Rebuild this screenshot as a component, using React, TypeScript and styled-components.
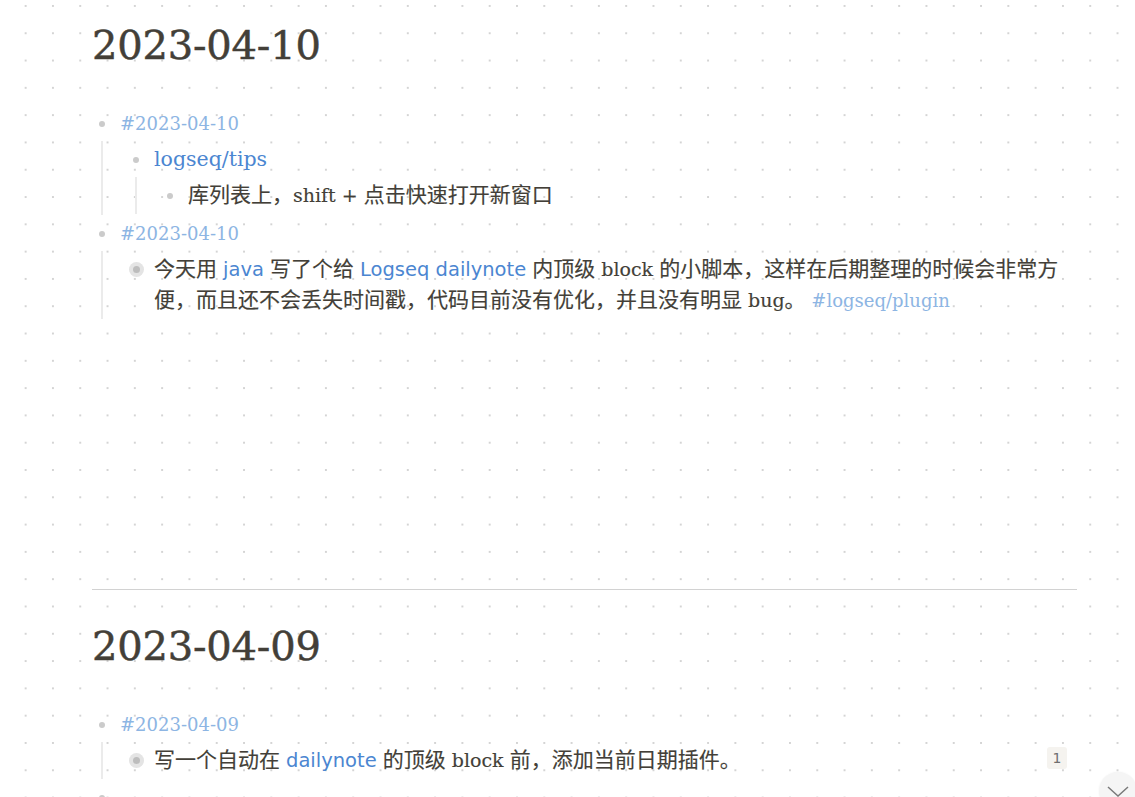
import React from "react";
import styled, { createGlobalStyle, css } from "styled-components";

const GlobalStyle = createGlobalStyle`
  html, body {
    margin: 0;
    padding: 0;
    overflow: hidden;
  }
  body {
    background-color: #ffffff;
    background-image: radial-gradient(circle, #d4d4d4 0.9px, rgba(255,255,255,0) 1.3px);
    background-size: 27.3px 27.3px;
    background-position: 12px 19.6px;
    font-family: "DejaVu Serif", "Noto Sans CJK SC", serif;
    color: #433f38;
  }
`;

const Page = styled.main`
  padding-left: 92px;
  width: 985px;
`;

const Journal = styled.section<{ $first?: boolean }>`
  box-sizing: border-box;
  padding-top: 21px;
  ${(p) =>
    p.$first &&
    css`
      min-height: 589px;
    `}
`;

const Divider = styled.hr`
  border: none;
  height: 1px;
  background: #d2d2d2;
  margin: 0 0 11px 0;
`;

const Title = styled.h1`
  margin: 0 0 36px 0;
  font-family: "DejaVu Serif", serif;
  font-weight: 400;
  font-size: 40px;
  line-height: 48px;
  color: #433f38;
  letter-spacing: -0.2px;
  -webkit-text-stroke: 0.5px #433f38;
`;

const BlockList = styled.div`
  display: flex;
  flex-direction: column;
`;

const Row = styled.div`
  display: flex;
  align-items: flex-start;
  padding: 3px 0 2px 0;
`;

const BulletBox = styled.span`
  flex: 0 0 20px;
  height: 31px;
  margin-right: 8px;
  display: flex;
  align-items: center;
  justify-content: center;
`;

const Bullet = styled.span<{ $collapsed?: boolean }>`
  display: block;
  border-radius: 50%;
  ${(p) =>
    p.$collapsed
      ? css`
          width: 7px;
          height: 7px;
          background: #bdbdbd;
          box-shadow: 0 0 0 4px #e4e4e4;
        `
      : css`
          width: 6px;
          height: 6px;
          background: #cbcbcb;
        `}
`;

const Content = styled.div`
  flex: 1;
  min-width: 0;
  font-size: 19px;
  line-height: 31px;
  color: #433f38;
  -webkit-text-stroke: 0.15px #433f38;
`;

const Children = styled.div`
  margin-left: 9px;
  border-left: 2px solid #ebebeb;
  padding-left: 23px;
  padding-bottom: 1px;
`;

const Zh = styled.span`
  font-family: "Noto Sans CJK SC", sans-serif;
  font-size: 21px;
  line-height: 1;
`;

const Tag = styled.span`
  color: #8db5e3;
  font-family: "DejaVu Serif", serif;
  font-size: 18px;
  -webkit-text-stroke: 0;
`;

const PageRef = styled.span<{ $serif?: boolean }>`
  color: #4b86d1;
  font-family: ${(p) => (p.$serif ? `"DejaVu Serif", serif` : `"DejaVu Sans", sans-serif`)};
  font-size: ${(p) => (p.$serif ? "20.5px" : "19.5px")};
  -webkit-text-stroke: 0;
`;

const Badge = styled.span`
  flex: 0 0 auto;
  margin: 2px 10px 0 8px;
  width: 20px;
  height: 22px;
  border-radius: 3px;
  background: #f5f3ef;
  color: #6f6f6f;
  font-family: "DejaVu Sans", sans-serif;
  font-size: 14px;
  line-height: 22px;
  text-align: center;
`;

const FloatButton = styled.button`
  position: fixed;
  right: -2px;
  bottom: -13px;
  width: 38px;
  height: 38px;
  border-radius: 50%;
  border: none;
  background: #f5f5f5;
  box-shadow: 0 0 2px rgba(0, 0, 0, 0.06);
  display: flex;
  align-items: flex-start;
  justify-content: center;
  padding: 14px 0 0 0;
  color: #7a7a7a;
`;

type BlockProps = {
  content?: React.ReactNode;
  collapsed?: boolean;
  badge?: string;
  children?: React.ReactNode;
};

function Block({ content, collapsed, badge, children }: BlockProps) {
  return (
    <div>
      <Row>
        <BulletBox>
          <Bullet $collapsed={collapsed} />
        </BulletBox>
        <Content>{content}</Content>
        {badge && <Badge>{badge}</Badge>}
      </Row>
      {children && <Children>{children}</Children>}
    </div>
  );
}

export default function App() {
  return (
    <>
      <GlobalStyle />
      <Page>
        <Journal $first>
          <Title>2023-04-10</Title>
          <BlockList>
            <Block content={<Tag>#2023-04-10</Tag>}>
              <Block content={<PageRef $serif>logseq/tips</PageRef>}>
                <Block
                  content={
                    <>
                      <Zh>库列表上，</Zh>shift + <Zh>点击快速打开新窗口</Zh>
                    </>
                  }
                />
              </Block>
            </Block>
            <Block content={<Tag>#2023-04-10</Tag>}>
              <Block
                collapsed
                content={
                  <>
                    <Zh>今天用</Zh> <PageRef>java</PageRef> <Zh>写了个给</Zh>{" "}
                    <PageRef>Logseq dailynote</PageRef> <Zh>内顶级</Zh> block{" "}
                    <Zh>
                      的小脚本，这样在后期整理的时候会非常方便，而且还不会丢失时间戳，代码目前没有优化，并且没有明显
                    </Zh>{" "}
                    bug<Zh>。</Zh><Tag> #logseq/plugin</Tag>
                  </>
                }
              />
            </Block>
          </BlockList>
        </Journal>
        <Divider />
        <Journal>
          <Title>2023-04-09</Title>
          <BlockList>
            <Block content={<Tag>#2023-04-09</Tag>}>
              <Block
                collapsed
                badge="1"
                content={
                  <>
                    <Zh>写一个自动在</Zh> <PageRef>dailynote</PageRef> <Zh>的顶级</Zh> block{" "}
                    <Zh>前，添加当前日期插件。</Zh>
                  </>
                }
              />
            </Block>
            <Block content={null} />
          </BlockList>
        </Journal>
      </Page>
      <FloatButton aria-label="scroll down">
        <svg width="22" height="12" viewBox="0 0 22 12" fill="none">
          <path d="M1 1 L11 10 L21 1" stroke="currentColor" strokeWidth="1.5" />
        </svg>
      </FloatButton>
    </>
  );
}
